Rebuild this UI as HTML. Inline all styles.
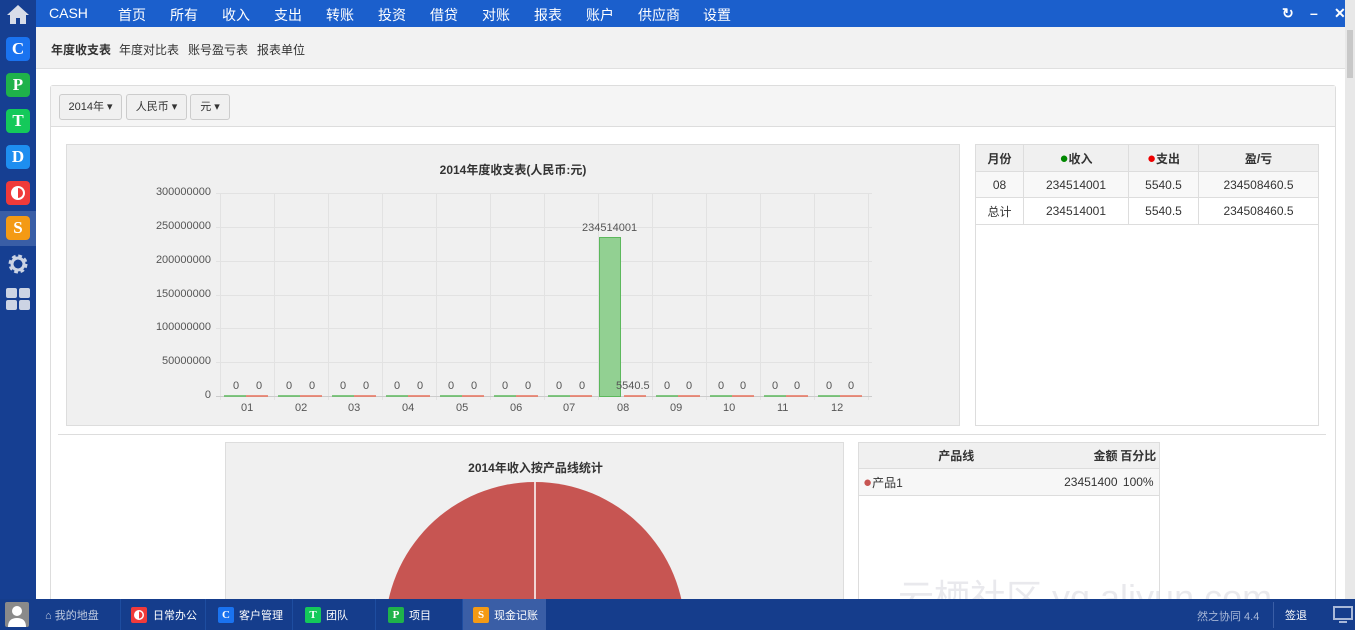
<!DOCTYPE html>
<html><head><meta charset="utf-8"><style>
*{margin:0;padding:0;box-sizing:border-box}
html,body{width:1355px;height:630px;overflow:hidden}
body{position:relative;background:#fff;font-family:"Liberation Sans","Noto Sans CJK SC",sans-serif;font-size:12px;color:#333}
.a{position:absolute}
#top{left:36px;top:0;width:1309px;height:27px;background:#1b5fcc;color:#fff;font-size:14px}
#top span{position:absolute;top:5px}
#side{left:0;top:0;width:36px;height:600px;background:#163f92}
.ic{position:absolute;left:6px;width:24px;height:24px;border-radius:4px;color:#fff;font-weight:bold;font-size:17px;text-align:center;line-height:24px;font-family:"Liberation Serif",serif}
#sub{left:36px;top:27px;width:1309px;height:42px;background:#f2f2f2;border-bottom:1px solid #e0e0e0}
#sub span{position:absolute;top:14px;font-size:12px}
.btn{position:absolute;top:94px;height:26px;border:1px solid #ccc;border-radius:3px;background:#f0f0f0;font-size:11px;line-height:24px;text-align:center}
table{border-collapse:collapse;font-size:12px}
td,th{border:1px solid #ddd;text-align:center}
th{background:#f0f0f0;font-weight:bold}
#bot{left:0;top:599px;width:1355px;height:31px;background:#153d8c;color:#fff;font-size:11px}
.tab{position:absolute;top:0;height:31px;border-left:1px solid #1e4da0}
.tab i{position:absolute;top:8px;width:16px;height:16px;border-radius:2px;font-style:normal;font-weight:bold;font-size:11px;text-align:center;line-height:16px;font-family:"Liberation Serif",serif}
.tab b{position:absolute;top:8px;font-weight:normal}
.yl{position:absolute;right:0;width:90px;text-align:right;font-size:11px;color:#555}
.zl{position:absolute;font-size:11px;color:#555}
</style></head><body>
<div id="side" class="a">
<svg class="a" style="left:6px;top:3px" width="24" height="22" viewBox="0 0 24 22"><path d="M12 2L1 12h3v9h6v-6h4v6h6v-9h3z" fill="#d8dde8"/></svg>
<div class="ic" style="top:37px;background:#1a73f0">C</div>
<div class="ic" style="top:73px;background:#1fb24a">P</div>
<div class="ic" style="top:109px;background:#14c95a">T</div>
<div class="ic" style="top:145px;background:#1e8ef0">D</div>
<div class="ic" style="top:181px;background:#f03a3a"><svg width="24" height="24" style="display:block"><circle cx="12" cy="12" r="7" fill="#fff"/><path d="M12 7a5 5 0 0 1 0 10z" fill="#f03a3a"/></svg></div>
<div class="a" style="left:0;top:211px;width:36px;height:35px;background:#3a5ea6"></div>
<div class="ic" style="top:216px;background:#f49a14">S</div>
<svg class="a" style="left:7px;top:253px" width="22" height="22" viewBox="0 0 22 22"><circle cx="11" cy="11" r="7" fill="none" stroke="#ccd4e4" stroke-width="5" stroke-dasharray="3.2 2.3"/><circle cx="11" cy="11" r="6" fill="none" stroke="#ccd4e4" stroke-width="3"/></svg>
<svg class="a" style="left:6px;top:288px" width="24" height="22"><rect x="0" y="0" width="11" height="10" rx="2" fill="#ccd4e4"/><rect x="13" y="0" width="11" height="10" rx="2" fill="#ccd4e4"/><rect x="0" y="12" width="11" height="10" rx="2" fill="#ccd4e4"/><rect x="13" y="12" width="11" height="10" rx="2" fill="#ccd4e4"/></svg>
</div>
<div id="top" class="a">
<span style="left:13px">CASH</span><span style="left:82px">首页</span><span style="left:134px">所有</span><span style="left:186px">收入</span><span style="left:238px">支出</span><span style="left:290px">转账</span><span style="left:342px">投资</span><span style="left:394px">借贷</span><span style="left:446px">对账</span><span style="left:498px">报表</span><span style="left:550px">账户</span><span style="left:602px">供应商</span><span style="left:667px">设置</span>
<span style="left:1246px;font-weight:bold">↻</span><span style="left:1274px;font-weight:bold">–</span><span style="left:1298px;font-weight:bold">✕</span>
</div>
<div class="a" style="left:1345px;top:0;width:10px;height:600px;background:#e8e8e8"><div class="a" style="left:2px;top:30px;width:6px;height:48px;background:#c8c8c8"></div></div>
<div id="sub" class="a"><span style="left:15px;font-weight:bold">年度收支表</span><span style="left:83px">年度对比表</span><span style="left:152px">账号盈亏表</span><span style="left:221px">报表单位</span></div>

<div class="a" style="left:50px;top:85px;width:1286px;height:530px;border:1px solid #ddd;border-radius:3px"></div>
<div class="a" style="left:51px;top:86px;width:1284px;height:41px;background:#f5f5f5;border-bottom:1px solid #ddd"></div>
<div class="btn" style="left:59px;width:63px">2014年 ▾</div>
<div class="btn" style="left:126px;width:61px">人民币 ▾</div>
<div class="btn" style="left:190px;width:40px">元 ▾</div>

<div class="a" style="left:66px;top:144px;width:894px;height:282px;background:#f0f0f0;border:1px solid #ddd"></div>
<div class="a" style="left:66px;top:161px;width:894px;text-align:center;font-weight:bold;font-size:12px">2014年度收支表(人民币:元)</div>
<svg class="a" style="left:0;top:0" width="960" height="430">
<g stroke="#e2e2e2" stroke-width="1">
<line x1="216" y1="193.5" x2="872" y2="193.5"/><line x1="216" y1="227.5" x2="872" y2="227.5"/><line x1="216" y1="261.5" x2="872" y2="261.5"/><line x1="216" y1="295.5" x2="872" y2="295.5"/><line x1="216" y1="328.5" x2="872" y2="328.5"/><line x1="216" y1="362.5" x2="872" y2="362.5"/>
<line x1="220.5" y1="193" x2="220.5" y2="400"/><line x1="274.5" y1="193" x2="274.5" y2="400"/><line x1="328.5" y1="193" x2="328.5" y2="400"/><line x1="382.5" y1="193" x2="382.5" y2="400"/><line x1="436.5" y1="193" x2="436.5" y2="400"/><line x1="490.5" y1="193" x2="490.5" y2="400"/><line x1="544.5" y1="193" x2="544.5" y2="400"/><line x1="598.5" y1="193" x2="598.5" y2="400"/><line x1="652.5" y1="193" x2="652.5" y2="400"/><line x1="706.5" y1="193" x2="706.5" y2="400"/><line x1="760.5" y1="193" x2="760.5" y2="400"/><line x1="814.5" y1="193" x2="814.5" y2="400"/><line x1="868.5" y1="193" x2="868.5" y2="400"/>
</g>
<line x1="216" y1="396.5" x2="872" y2="396.5" stroke="#ccc"/>
<g stroke-width="1.5">
<path d="M224 396h22M278 396h22M332 396h22M386 396h22M440 396h22M494 396h22M548 396h22M656 396h22M710 396h22M764 396h22M818 396h22" stroke="#5cb85c"/>
<path d="M246 396h22M300 396h22M354 396h22M408 396h22M462 396h22M516 396h22M570 396h22M624 396h22M678 396h22M732 396h22M786 396h22M840 396h22" stroke="#e8705a"/>
</g>
<rect x="599.5" y="237.5" width="21" height="159" fill="#92d092" stroke="#5cb85c"/>
</svg>
<div class="a" style="left:66px;top:186px;width:145px;height:220px">
<div class="yl" style="top:0">300000000</div><div class="yl" style="top:34px">250000000</div><div class="yl" style="top:68px">200000000</div><div class="yl" style="top:102px">150000000</div><div class="yl" style="top:135px">100000000</div><div class="yl" style="top:169px">50000000</div><div class="yl" style="top:203px">0</div>
</div>
<div class="zl" style="left:233px;top:380px">0</div><div class="zl" style="left:256px;top:380px">0</div>
<div class="zl" style="left:286px;top:380px">0</div><div class="zl" style="left:309px;top:380px">0</div>
<div class="zl" style="left:340px;top:380px">0</div><div class="zl" style="left:363px;top:380px">0</div>
<div class="zl" style="left:394px;top:380px">0</div><div class="zl" style="left:417px;top:380px">0</div>
<div class="zl" style="left:448px;top:380px">0</div><div class="zl" style="left:471px;top:380px">0</div>
<div class="zl" style="left:502px;top:380px">0</div><div class="zl" style="left:525px;top:380px">0</div>
<div class="zl" style="left:556px;top:380px">0</div><div class="zl" style="left:579px;top:380px">0</div>
<div class="zl" style="left:582px;top:222px">234514001</div><div class="zl" style="left:616px;top:380px">5540.5</div>
<div class="zl" style="left:664px;top:380px">0</div><div class="zl" style="left:686px;top:380px">0</div>
<div class="zl" style="left:718px;top:380px">0</div><div class="zl" style="left:740px;top:380px">0</div>
<div class="zl" style="left:772px;top:380px">0</div><div class="zl" style="left:794px;top:380px">0</div>
<div class="zl" style="left:826px;top:380px">0</div><div class="zl" style="left:848px;top:380px">0</div>
<div class="zl" style="left:241px;top:402px">01</div><div class="zl" style="left:295px;top:402px">02</div><div class="zl" style="left:348px;top:402px">03</div><div class="zl" style="left:402px;top:402px">04</div><div class="zl" style="left:456px;top:402px">05</div><div class="zl" style="left:510px;top:402px">06</div><div class="zl" style="left:563px;top:402px">07</div><div class="zl" style="left:617px;top:402px">08</div><div class="zl" style="left:670px;top:402px">09</div><div class="zl" style="left:723px;top:402px">10</div><div class="zl" style="left:777px;top:402px">11</div><div class="zl" style="left:831px;top:402px">12</div>

<div class="a" style="left:975px;top:144px;width:344px;height:282px;border:1px solid #ddd"></div>
<table class="a" style="left:975px;top:144px;width:344px">
<tr style="height:27px"><th style="width:48px">月份</th><th style="width:105px"><span style="color:#080;font-size:15px">●</span>收入</th><th style="width:70px"><span style="color:#e00;font-size:15px">●</span>支出</th><th>盈/亏</th></tr>
<tr style="height:26px;background:#f8f8f8"><td>08</td><td>234514001</td><td>5540.5</td><td>234508460.5</td></tr>
<tr style="height:27px"><td>总计</td><td>234514001</td><td>5540.5</td><td>234508460.5</td></tr>
</table>

<div class="a" style="left:58px;top:434px;width:1268px;height:1px;background:#ddd"></div>

<div class="a" style="left:225px;top:442px;width:619px;height:160px;background:#f0f0f0;border:1px solid #ddd;overflow:hidden">
<div class="a" style="left:0;top:16px;width:619px;text-align:center;font-weight:bold">2014年收入按产品线统计</div>
<svg class="a" style="left:0;top:0" width="619" height="160"><circle cx="309" cy="189" r="150" fill="#c75552"/><line x1="309" y1="39" x2="309" y2="160" stroke="#fff" stroke-width="1.5"/></svg>
</div>

<div class="a" style="left:858px;top:442px;width:302px;height:160px;border:1px solid #ddd"></div>
<table class="a" style="left:858px;top:442px;width:302px">
<tr style="height:26px"><th style="border-right:0;width:195px">产品线</th><th style="border-left:0;border-right:0;text-align:right">金额</th><th style="border-left:0;width:42px">百分比</th></tr>
<tr style="height:27px;background:#f7f7f7"><td style="text-align:left;border-right:0;padding-left:4px"><span style="color:#c75552;font-size:15px">●</span>产品1</td><td style="border:0;border-bottom:1px solid #ddd;text-align:right">23451400</td><td style="border-left:0">100%</td></tr>
</table>

<div class="a" style="left:898px;top:578px;font-size:36px;line-height:40px;color:rgba(215,215,222,.55);white-space:nowrap">云栖社区 yq.aliyun.com</div>

<div id="bot" class="a">
<div class="a" style="left:5px;top:3px;width:24px;height:25px;background:#8a8a8a;border-radius:2px;overflow:hidden"><svg width="24" height="25"><circle cx="12" cy="9" r="5" fill="#fff"/><path d="M3 25q0-9 9-9q9 0 9 9z" fill="#fff"/></svg></div>
<div class="tab" style="left:35px;width:82px;border:0"><b style="left:10px;color:#c0cbe0">⌂ 我的地盘</b></div>
<div class="tab" style="left:120px;width:83px"><i style="left:10px;background:#f03a3a"><svg width="16" height="16" style="display:block"><circle cx="8" cy="8" r="5" fill="#fff"/><path d="M8 4.5a3.5 3.5 0 0 1 0 7z" fill="#f03a3a"/></svg></i><b style="left:32px">日常办公</b></div>
<div class="tab" style="left:205px;width:84px"><i style="left:12px;background:#1a73f0">C</i><b style="left:33px">客户管理</b></div>
<div class="tab" style="left:292px;width:80px"><i style="left:12px;background:#14c95a">T</i><b style="left:33px">团队</b></div>
<div class="tab" style="left:375px;width:84px"><i style="left:12px;background:#1fb24a">P</i><b style="left:33px">项目</b></div>
<div class="tab" style="left:462px;width:84px;background:#3a5ea6"><i style="left:10px;background:#f49a14">S</i><b style="left:31px">现金记账</b></div>
<div class="a" style="left:1197px;top:9px;color:#a8b8d8">然之协同 4.4</div>
<div class="a" style="left:1273px;top:3px;width:1px;height:26px;background:#3a5ea6"></div>
<div class="a" style="left:1285px;top:8px">签退</div>
<svg class="a" style="left:1333px;top:7px" width="20" height="18"><rect x="1" y="1" width="18" height="12" fill="none" stroke="#a8b8d8" stroke-width="2"/><rect x="6" y="15" width="8" height="2" fill="#a8b8d8"/></svg>
</div>
</body></html>
